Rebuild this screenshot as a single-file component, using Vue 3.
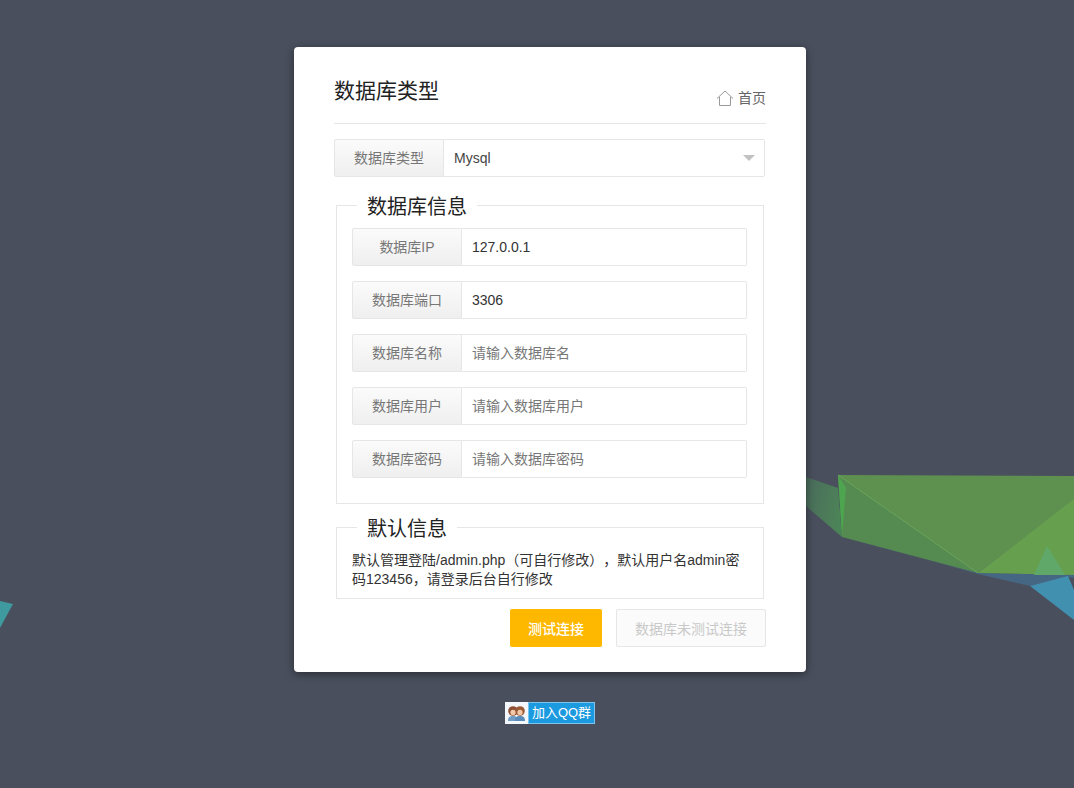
<template>
  <div class="page">
    <svg class="bg" viewBox="0 0 1074 788" width="1074" height="788" aria-hidden="true">
      <defs>
        <linearGradient id="fade" x1="0" y1="0" x2="1" y2="0.4">
          <stop offset="0" stop-color="#4a6a5c" />
          <stop offset="1" stop-color="#4d8358" />
        </linearGradient>
      </defs>
      <polygon points="806,477 838,488 842,537 806,506" fill="url(#fade)" />
      <polygon points="842,537 978,573 1074,575 1074,578 1068,577 1030,586 978,574 900,552" fill="#466783" />
      <polygon points="838,475 1074,476 1074,500 978,573" fill="#5e9150" />
      <polygon points="838,475 978,573 842,537" fill="#558a50" />
      <polygon points="1074,499 978,573 1074,575" fill="#66a04f" />
      <polygon points="1047,546 1065,575 1034,575" fill="#5fa86a" />
      <polygon points="838,475 846,488 842,537" fill="#4ea54f" />
      <line x1="838" y1="475" x2="978" y2="573" stroke="#6aa85c" stroke-width="1" />
      <polygon points="1030,586 1068,576 1074,590 1074,620" fill="#4290b0" />
      <polygon points="0,601 13,604 0,628" fill="#3f9a9f" />
    </svg>

    <main class="card">
      <header class="head">
        <h1 class="title">数据库类型</h1>
        <a class="home" href="#">
          <svg width="18" height="16" viewBox="0 0 18 16" fill="none" stroke="#999" stroke-width="1">
            <path d="M1 8.5 L9 1 L17 8.5 M3.5 7 V15.5 H14.5 V7" />
          </svg>
          首页
        </a>
      </header>

      <div class="group type-group">
        <span class="label">数据库类型</span>
        <div class="select"><span>Mysql</span><i class="arrow"></i></div>
      </div>

      <fieldset class="box info">
        <legend>数据库信息</legend>
        <div v-for="f in fields" :key="f.label" class="group">
          <span class="label">{{ f.label }}</span>
          <input class="field" :value="f.value" :placeholder="f.placeholder" />
        </div>
      </fieldset>

      <fieldset class="box note">
        <legend>默认信息</legend>
        <p>默认管理登陆/admin.php（可自行修改），默认用户名admin密码123456，请登录后台自行修改</p>
      </fieldset>

      <div class="actions">
        <button class="btn primary">测试连接</button>
        <button class="btn disabled">数据库未测试连接</button>
      </div>
    </main>

    <a class="qq" href="#">
      <span class="qq-icon">
        <svg width="19" height="18" viewBox="0 0 19 18">
          <path d="M1 17 C1 13 3 12 6 12 C9 12 11 13 11 17 Z" fill="#6f9bc4" />
          <path d="M8 17 C8 13 10 12 13 12 C16 12 18 13 18 17 Z" fill="#5a8ab8" />
          <circle cx="6" cy="7" r="4.8" fill="#8f4f35" />
          <circle cx="13" cy="7" r="4.8" fill="#9c5a36" />
          <circle cx="6" cy="8.4" r="2.6" fill="#f2c9a8" />
          <circle cx="13" cy="8.4" r="2.6" fill="#f2c9a8" />
        </svg>
      </span>
      <span class="qq-text">加入QQ群</span>
    </a>
  </div>
</template>

<script setup>
const fields = [
  { label: '数据库IP', value: '127.0.0.1', placeholder: '' },
  { label: '数据库端口', value: '3306', placeholder: '' },
  { label: '数据库名称', value: '', placeholder: '请输入数据库名' },
  { label: '数据库用户', value: '', placeholder: '请输入数据库用户' },
  { label: '数据库密码', value: '', placeholder: '请输入数据库密码' },
]
</script>

<style>
html, body { margin: 0; background: #494f5d; }
</style>

<style scoped>
.page {
  position: relative;
  box-sizing: border-box;
  height: 788px;
  padding-left: 26px;
  overflow: hidden;
  display: flex;
  flex-direction: column;
  align-items: center;
  font-family: "Liberation Sans", "Noto Sans CJK SC", sans-serif;
  font-size: 14px;
  color: #333;
  text-spacing-trim: space-all;
}
.bg { position: absolute; left: 0; top: 0; }
.card {
  position: relative;
  box-sizing: border-box;
  width: 512px;
  height: 625px;
  margin-top: 47px;
  padding: 0 40px;
  background: #fff;
  border-radius: 4px;
  box-shadow: 0 2px 8px rgba(0, 0, 0, .45);
}
.head {
  display: flex;
  justify-content: space-between;
  align-items: flex-end;
  padding-bottom: 16px;
  height: 60px;
  border-bottom: 1px solid #e6e6e6;
}
.title { margin: 0 0 1px; font-size: 21px; font-weight: 400; line-height: 30px; color: #222; }
.home {
  display: flex;
  align-items: center;
  gap: 4px;
  margin-bottom: -1px;
  color: #666;
  text-decoration: none;
  line-height: 20px;
}
.group { display: flex; width: 395px; height: 38px; }
.label {
  box-sizing: border-box;
  flex: none;
  width: 110px;
  padding-bottom: 2px;
  display: flex;
  align-items: center;
  justify-content: center;
  background: linear-gradient(#fbfbfb, #efefef);
  border: 1px solid #e6e6e6;
  border-radius: 2px 0 0 2px;
  color: #777;
}
.type-group { width: 431px; margin-top: 15px; }
.select {
  flex: 1;
  display: flex;
  align-items: center;
  justify-content: space-between;
  padding: 0 10px;
  border: 1px solid #e6e6e6;
  border-left: 0;
  border-radius: 0 2px 2px 0;
  color: #444;
}
.arrow { border: 6px solid transparent; border-top: 6px solid #c2c2c2; border-bottom: 0; margin-right: -1px; }
.field {
  box-sizing: border-box;
  flex: 1;
  min-width: 0;
  height: 38px;
  padding: 0 10px;
  border: 1px solid #e6e6e6;
  border-left: 0;
  border-radius: 0 2px 2px 0;
  outline: 0;
  font: inherit;
  color: #333;
}
.field::placeholder { color: #777; opacity: 1; }
.box {
  box-sizing: border-box;
  width: 428px;
  margin: 0 0 0 2px;
  padding: 0 15px;
  min-width: 0;
  border: 1px solid #e6e6e6;
}
.box legend {
  margin-left: 5px;
  padding: 4px 10px 0;
  font-size: 20px;
  line-height: 28px;
  color: #222;
}
.info {
  margin-top: 12px;
  height: 315px;
  display: flex;
  flex-direction: column;
  padding-top: 7px;
}
.info .group + .group { margin-top: 15px; }
.note { height: 88px; margin-top: 7px; }
.note p { margin: 0; line-height: 19px; color: #333; padding-top: 8px; }
.actions { display: flex; justify-content: flex-end; gap: 14px; margin-top: 10px; }
.btn {
  box-sizing: border-box;
  height: 38px;
  border-radius: 2px;
  border: 1px solid transparent;
  font: inherit;
  padding: 0;
}
.primary { width: 92px; background: #ffb800; color: #fff; font-weight: 500; }
.disabled { width: 150px; background: #fbfbfb; border-color: #e6e6e6; color: #c9c9c9; }
.qq {
  position: relative;
  display: flex;
  width: 90px;
  height: 22px;
  margin-top: 30px;
  text-decoration: none;
}
.qq-icon {
  width: 23px;
  background: #f4f7fb;
  display: flex;
  align-items: center;
  justify-content: center;
}
.qq-text {
  flex: 1;
  background: #1b9ae0;
  box-shadow: inset 0 0 0 1px #7cc4ee;
  color: #fff;
  font-size: 13px;
  line-height: 22px;
  text-align: center;
}
</style>
